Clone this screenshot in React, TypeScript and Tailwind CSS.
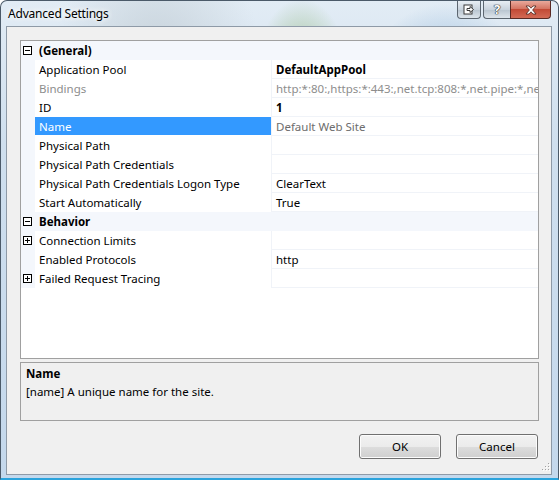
import React from "react";

type Row =
    | { kind: "cat"; label: string }
    | {
          kind: "prop";
          label: string;
          value?: string;
          bold?: boolean;
          disabled?: boolean;
          muted?: boolean;
          selected?: boolean;
          expandable?: boolean;
      };

const rows: Row[] = [
    { kind: "cat", label: "(General)" },
    { kind: "prop", label: "Application Pool", value: "DefaultAppPool", bold: true },
    { kind: "prop", label: "Bindings", value: "http:*:80:,https:*:443:,net.tcp:808:*,net.pipe:*,net.msmq.formatname:localhost", disabled: true },
    { kind: "prop", label: "ID", value: "1", bold: true },
    { kind: "prop", label: "Name", value: "Default Web Site", muted: true, selected: true },
    { kind: "prop", label: "Physical Path" },
    { kind: "prop", label: "Physical Path Credentials" },
    { kind: "prop", label: "Physical Path Credentials Logon Type", value: "ClearText" },
    { kind: "prop", label: "Start Automatically", value: "True" },
    { kind: "cat", label: "Behavior" },
    { kind: "prop", label: "Connection Limits", expandable: true },
    { kind: "prop", label: "Enabled Protocols", value: "http" },
    { kind: "prop", label: "Failed Request Tracing", expandable: true },
];

// small +/- box used in the margin column
function Glyph({ open }: { open: boolean }) {
    return (
        <svg width="9" height="9" viewBox="0 0 9 9" className="ml-[2px] shrink-0">
            <rect x="0.5" y="0.5" width="8" height="8" fill="#fff" stroke="#000" />
            <line x1="2" y1="4.5" x2="7" y2="4.5" stroke="#000" />
            {!open && <line x1="4.5" y1="2" x2="4.5" y2="7" stroke="#000" />}
        </svg>
    );
}

function GridRow({ row }: { row: Row }) {
    if (row.kind === "cat") {
        return (
            <div className="flex h-[19px] shrink-0 items-center bg-[#f4f7fc]">
                <div className="flex w-[14px] items-center">
                    <Glyph open />
                </div>
                <span className="pl-[4px] pt-[1px] font-bold leading-[18px] text-black">{row.label}</span>
            </div>
        );
    }
    return (
        <div className="flex h-[19px] shrink-0">
            <div className="flex w-[14px] shrink-0 items-center bg-[#f4f7fc]">
                {row.expandable && <Glyph open={false} />}
            </div>
            <div
                className={
                    row.selected
                        ? "flex h-[18px] w-[236px] shrink-0 items-center bg-[#3399ff] pl-[4px] text-white"
                        : row.disabled
                        ? "flex h-[18px] w-[236px] shrink-0 items-center pl-[4px] text-[#8d8d8d]"
                        : "flex h-[18px] w-[236px] shrink-0 items-center pl-[4px] text-black"
                }
            >
                <span className="whitespace-nowrap pt-[1px] leading-[18px]">{row.label}</span>
            </div>
            <div className="w-px shrink-0 bg-[#f0f3f8]" />
            <div className="flex min-w-0 flex-1 flex-col">
                <div
                    className={
                        row.bold
                            ? "h-[18px] overflow-hidden whitespace-nowrap pl-[4px] pt-[1px] font-bold leading-[18px] text-black"
                            : row.disabled
                            ? "h-[18px] overflow-hidden whitespace-nowrap pl-[4px] pt-[1px] leading-[18px] text-[#8d8d8d]"
                            : row.muted
                            ? "h-[18px] overflow-hidden whitespace-nowrap pl-[4px] pt-[1px] leading-[18px] text-[#6d6d6d]"
                            : "h-[18px] overflow-hidden whitespace-nowrap pl-[4px] pt-[1px] leading-[18px] text-black"
                    }
                >
                    {row.value}
                </div>
                <div className="h-px bg-[#f0f3f8]" />
            </div>
        </div>
    );
}

function CaptionButtons() {
    return (
        <div className="flex items-start pr-[7px]">
            <div className="mr-[2px] flex h-[18px] w-[24px] items-center justify-center rounded-b-[4px] border border-t-0 border-[#5c6670] bg-[linear-gradient(180deg,#e8eef4,#c9d3dd_50%,#b8c4cf_51%,#dde5ec)]">
                <svg width="12" height="11" viewBox="0 0 12 11">
                    <rect x="1" y="1" width="8" height="9" fill="#fff" stroke="#3a3a3a" />
                    <path d="M4 4.5h3v-2l3.5 3-3.5 3v-2h-3z" fill="#fff" stroke="#3a3a3a" strokeLinejoin="round" />
                </svg>
            </div>
            <div className="flex h-[18px] w-[27px] items-center justify-center rounded-bl-[4px] border border-t-0 border-r-0 border-[#5c6670] bg-[linear-gradient(180deg,#e8eef4,#c9d3dd_50%,#b8c4cf_51%,#dde5ec)]">
                <span className="text-[13px] font-bold leading-none text-white [text-shadow:0_0_1px_#222,0_0_1px_#222,0_0_1px_#222]">?</span>
            </div>
            <div className="flex h-[18px] w-[41px] items-center justify-center rounded-br-[4px] border border-t-0 border-[#5a2a24] bg-[linear-gradient(180deg,#e9a99c,#d47563_45%,#c24a36_50%,#d36a55)]">
                <svg width="12" height="10" viewBox="0 0 12 10">
                    <path
                        d="M1 1h3l2 2.2L8 1h3L7.6 5 11 9H8L6 6.8 4 9H1l3.4-4z"
                        fill="#fff"
                        stroke="#4a2620"
                        strokeWidth="0.8"
                        strokeLinejoin="round"
                    />
                </svg>
            </div>
        </div>
    );
}

function DialogButton({ label }: { label: string }) {
    return (
        <button className="h-[25px] w-[82px] rounded-[3px] border border-[#707070] bg-[linear-gradient(180deg,#f2f2f2,#ebebeb_50%,#dddddd_51%,#cfcfcf)] text-[11.5px] leading-none text-black shadow-[inset_0_0_0_1px_#fcfcfc]">
            {label}
        </button>
    );
}

export default function App() {
    return (
        <div className="flex h-[480px] w-[559px] flex-col overflow-hidden rounded-t-[7px] border border-b-2 border-[#4b5a69] border-b-[#2aa3dc] bg-[radial-gradient(ellipse_at_28%_10%,#c9d4dc_0,transparent_18%),radial-gradient(ellipse_at_54%_12%,#a8c6a0_0,transparent_10%),radial-gradient(ellipse_at_80%_15%,#9fc0de_0,transparent_12%),linear-gradient(180deg,#e2ecf5,#cfdfee_30%,#c4d8ec)] font-['Noto_Sans',sans-serif] text-[11.5px]">
            {/* Title bar */}
            <div className="flex h-[25px] shrink-0 items-start justify-between">
                <span className="pl-[7px] pt-[5px] text-[12px] leading-[16px] tracking-[-0.2px] text-black [text-shadow:0_0_6px_#fff,0_0_6px_#fff]">
                    Advanced Settings
                </span>
                <CaptionButtons />
            </div>

            {/* Client area */}
            <div className="relative mb-[3px] ml-[5px] mr-[6px] flex h-[449px] flex-col border border-[#8e9aa7] bg-[#f0f0f0] pl-[13px] pr-[12px] pt-[13px]">
                {/* Property grid */}
                <div className="flex h-[319px] shrink-0 flex-col overflow-hidden border border-[#a0a0a0] bg-white">
                    {rows.map((r, i) => (
                        <GridRow key={i} row={r} />
                    ))}
                </div>

                {/* Help pane */}
                <div className="mt-[3px] h-[59px] shrink-0 border border-[#a0a0a0] bg-[#f0f0f0] px-[5px] pt-[2px] leading-[18px] text-black">
                    <div className="font-bold">Name</div>
                    <div>[name] A unique name for the site.</div>
                </div>

                {/* Buttons */}
                <div className="mt-[13px] flex justify-end gap-[15px] pr-[1px]">
                    <DialogButton label="OK" />
                    <DialogButton label="Cancel" />
                </div>

                {/* size grip */}
                <svg width="9" height="9" viewBox="0 0 9 9" className="absolute bottom-[3px] right-[1px]">
                    {[
                        [7, 1],
                        [4, 4],
                        [7, 4],
                        [1, 7],
                        [4, 7],
                        [7, 7],
                    ].map(([x, y], i) => (
                        <g key={i}>
                            <rect x={x + 1} y={y + 1} width="1" height="1" fill="#fff" />
                            <rect x={x} y={y} width="1" height="1" fill="#a0a0a0" />
                        </g>
                    ))}
                </svg>
            </div>
        </div>
    );
}
